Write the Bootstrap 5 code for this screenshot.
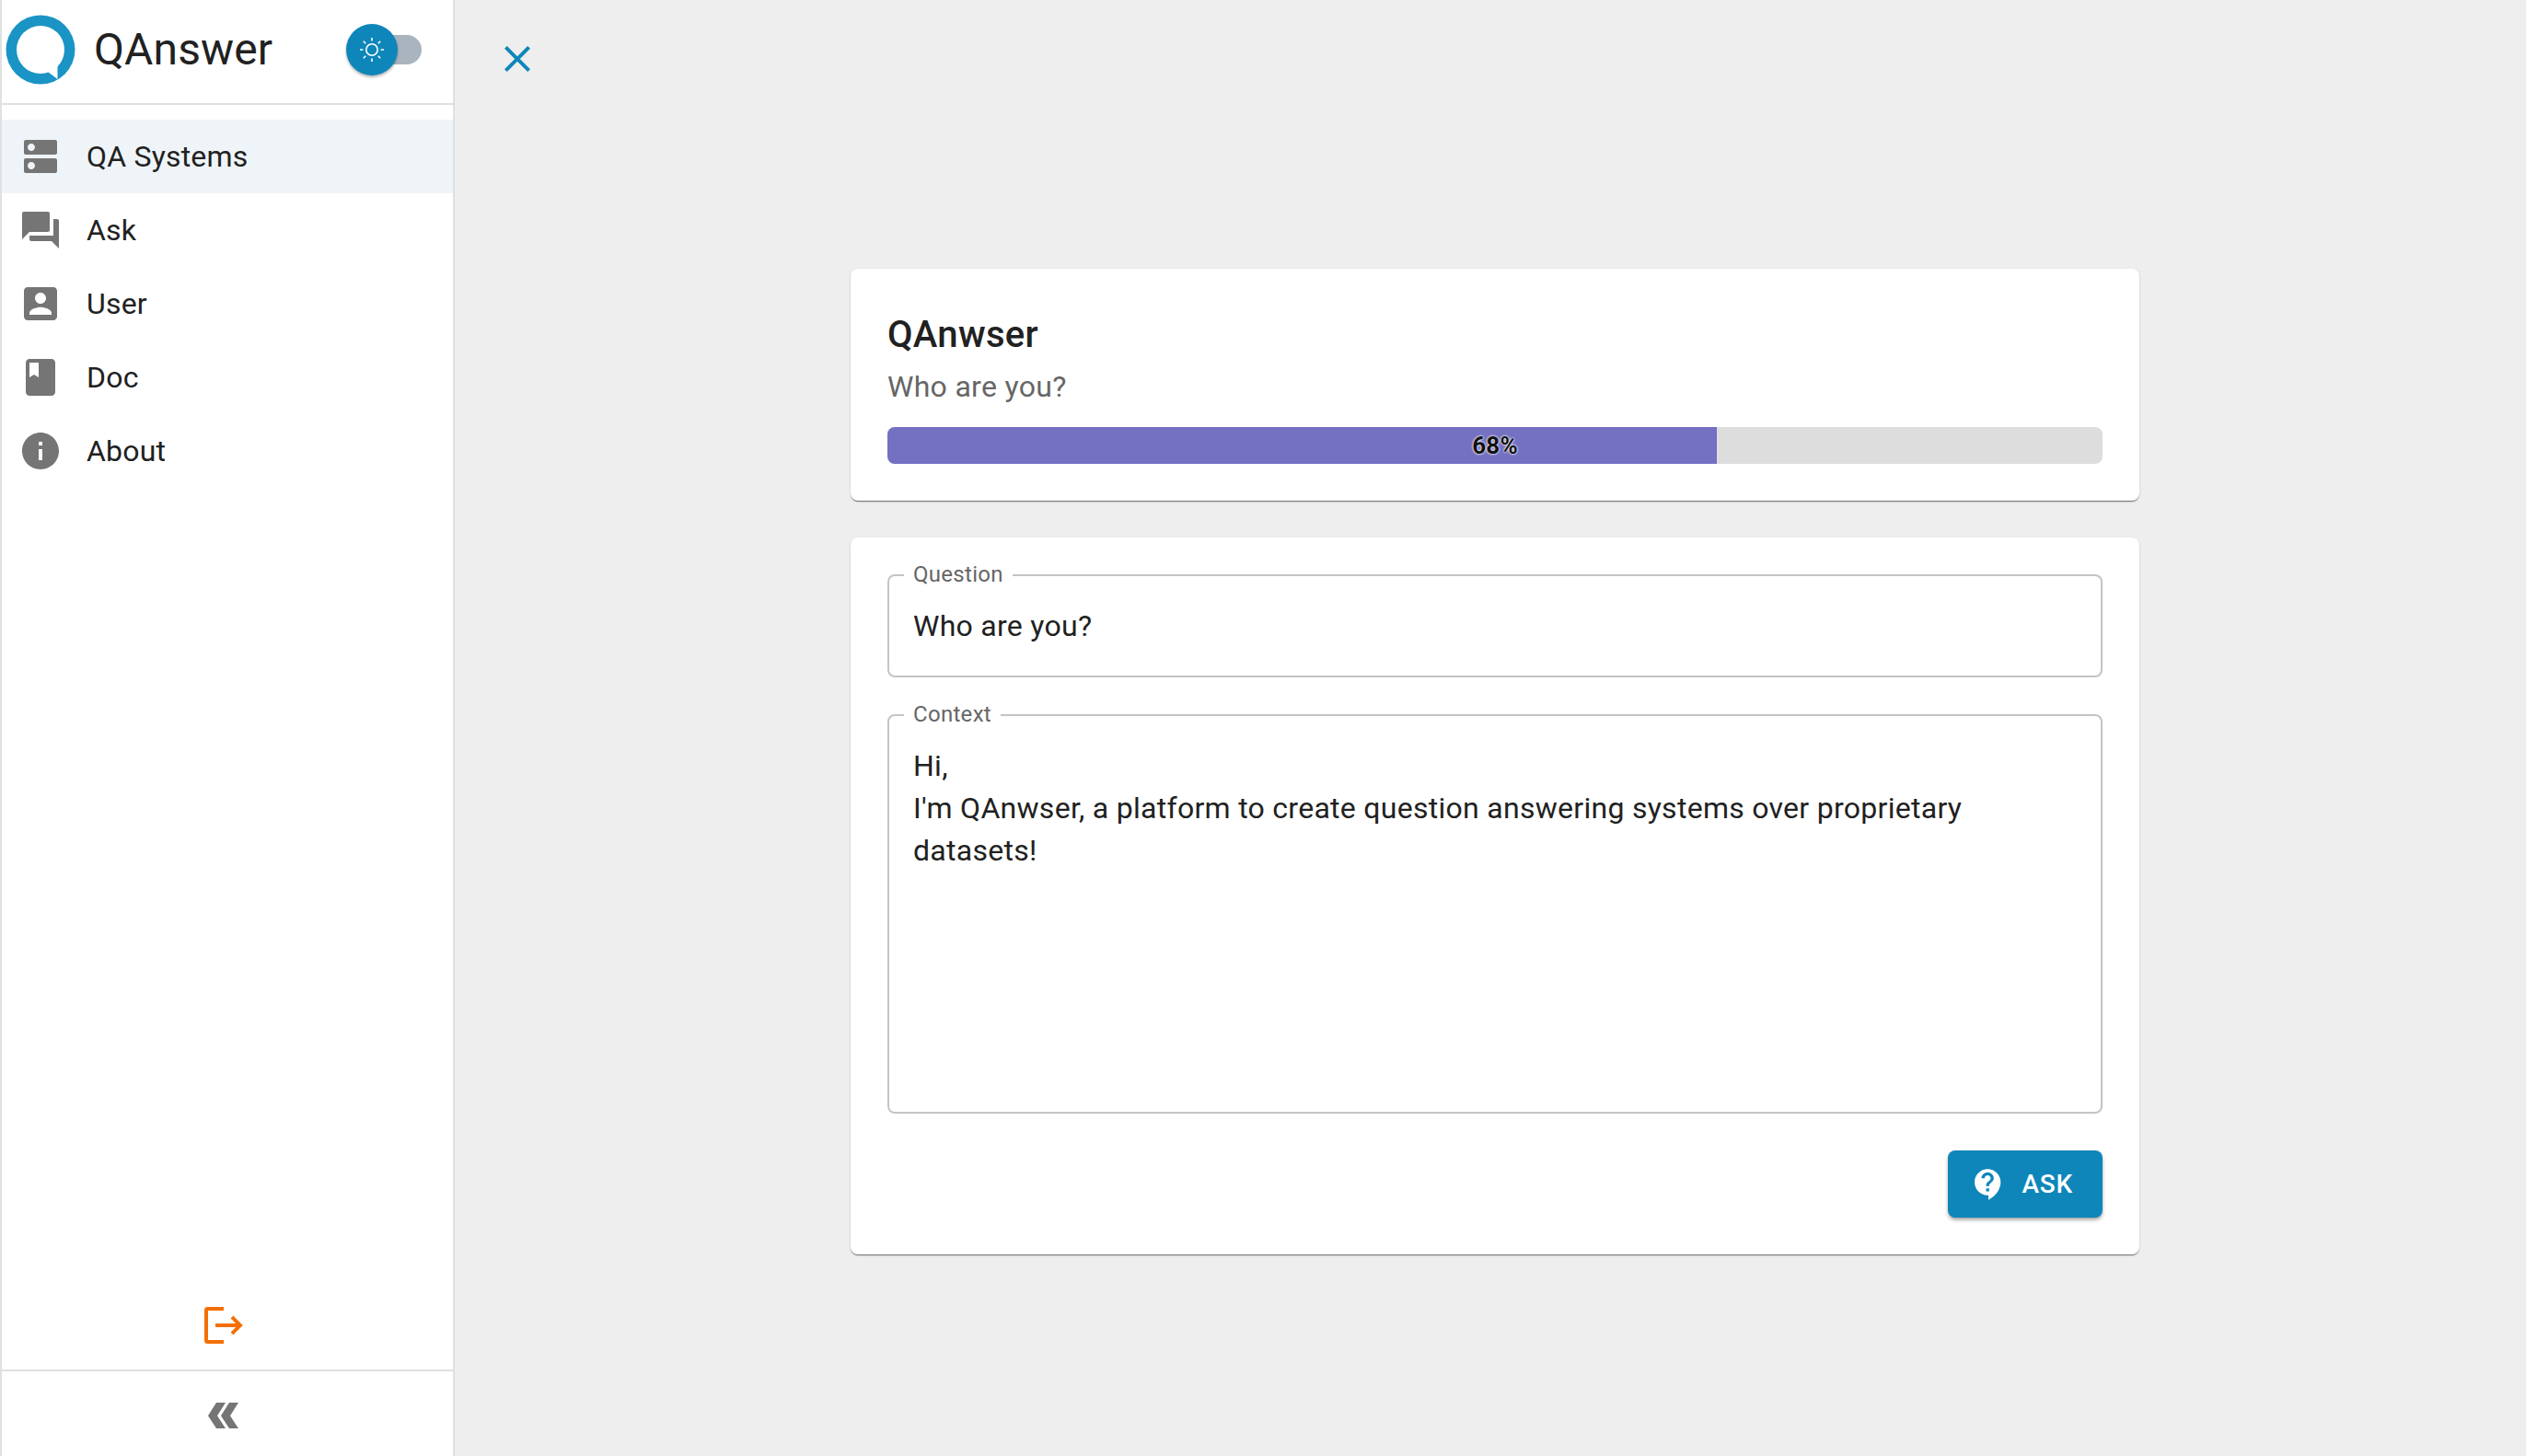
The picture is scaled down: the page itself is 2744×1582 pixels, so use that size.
<!DOCTYPE html>
<html lang="en">
<head>
    <meta charset="utf-8">
    <title>QAnswer</title>
    <link href="https://cdn.jsdelivr.net/npm/bootstrap@5.3.3/dist/css/bootstrap.min.css" rel="stylesheet">
    <style>
        body {
            font-family: Roboto, "Liberation Sans", sans-serif;
            background-color: #eeeeee;
            color: #212121;
            font-size: 32px;
            letter-spacing: .2px;
        }
        .app-shell { height: 100vh; overflow: hidden; }
        .side-panel {
            width: 494px;
            background: #fff;
            border-left: 2px solid #e0e0e0;
            border-right: 2px solid #e0e0e0;
        }
        .side-head { height: 112px; padding-left: 4px; padding-bottom: 4px; }
        .side-logo { width: 76px; height: 76px; }
        .side-title { font-size: 48px; margin-left: 20px; line-height: 1; letter-spacing: .1px; }
        .theme-switch { position: relative; width: 82px; height: 56px; margin-left: 80px; }
        .switch-track {
            position: absolute; left: 14px; top: 12px; width: 68px; height: 32px;
            border-radius: 16px; background: #a9b4be;
        }
        .switch-thumb {
            position: absolute; left: 0; top: 0; width: 56px; height: 56px; border-radius: 50%;
            background: #0e86ba; box-shadow: 0 2px 3px rgba(0,0,0,.3);
        }
        .side-rule { height: 2px; background: #e0e0e0; }
        .side-menu { padding-top: 16px; }
        .menu-row { height: 80px; padding-left: 18px; color: #212121; text-decoration: none; }
        .menu-row.is-current { background: #eff4f8; }
        .menu-icon { width: 48px; height: 48px; margin-right: 26px; fill: #757575; flex: none; }
        .logout-wrap { height: 96px; padding-right: 8px; }
        .collapse-wrap { height: 92px; padding-right: 9px; padding-top: 3px; }
        .main-area { padding-left: 430px; width: 2250px; }
        .close-btn { left: 44px; top: 40px; width: 48px; height: 48px; fill: #0e86ba; }
        .sheet {
            width: 1400px; padding: 40px; background: #fff; border: 0; border-radius: 8px;
            box-shadow: 0 2px 1px -1px rgba(0,0,0,.35), 0 1px 1px rgba(0,0,0,.2), 0 1px 3px rgba(0,0,0,.12);
        }
        .sheet-one { margin-top: 292px; margin-bottom: 40px; }
        .sheet-title { font-size: 40px; font-weight: 500; line-height: 64px; margin: 0; letter-spacing: .3px; }
        .sheet-sub { font-size: 32px; line-height: 48px; margin: 0 0 20px; color: #666; letter-spacing: .3px; }
        .meter { height: 40px; border-radius: 8px; background: #dddddd; position: relative; }
        .meter .progress-bar { background: #7470c2; }
        .meter-label {
            position: absolute; inset: 0; text-align: center; line-height: 40px; font-size: 26px; font-weight: 700;
            color: #111; text-shadow: 0 0 3px #fff, 0 0 2px #fff;
        }
        .field-box { position: relative; margin-bottom: 40px; }
        .field-box label {
            position: absolute; left: 18px; top: -15px; padding: 0 10px; background: #fff;
            font-size: 24px; line-height: 30px; color: #666; letter-spacing: .3px;
        }
        .field-box .form-control {
            border: 2px solid #c4c4c4; border-radius: 8px; font-size: 32px; color: #212121;
            font-family: inherit; letter-spacing: .28px;
        }
        .field-input { height: 112px; padding: 0 26px; }
        .field-area { height: 434px; padding: 31px 26px; line-height: 46px; resize: none; }
        .ask-btn {
            background: #0e86ba; color: #fff; border: 0; border-radius: 8px; height: 73px;
            padding: 0 32px 0 24px; font-size: 28px; font-weight: 500; letter-spacing: .8px; line-height: 49px;
            box-shadow: 0 3px 4px -1px rgba(0,0,0,.3), 0 2px 4px rgba(0,0,0,.15);
        }
        .ask-btn svg { width: 40px; height: 40px; fill: #fff; margin-right: 16px; }
    </style>
</head>
<body>
<div class="app-shell d-flex">
    <aside class="side-panel d-flex flex-column flex-shrink-0">
        <div class="side-head d-flex align-items-center">
            <svg class="side-logo" viewBox="0 0 76 76" aria-label="QAnswer logo">
                <circle cx="38" cy="38" r="37.5" fill="#1a94c4"/>
                <circle cx="38" cy="38" r="26" fill="#fff"/>
                <polygon points="46,62 56.5,70 56.5,54" fill="#fff"/>
            </svg>
            <span class="side-title">QAnswer</span>
            <div class="theme-switch">
                <span class="switch-track"></span>
                <span class="switch-thumb d-flex align-items-center justify-content-center">
                    <svg width="28" height="28" viewBox="0 0 28 28" fill="none" stroke="#fff" stroke-width="1.6">
                        <circle cx="14" cy="14" r="6.2"/>
                        <path d="M14 1v3.4M14 23.6V27M1 14h3.4M23.6 14H27M4.8 4.8l2.4 2.4M20.8 20.8l2.4 2.4M4.8 23.2l2.4-2.4M20.8 7.2l2.4-2.4"/>
                    </svg>
                </span>
            </div>
        </div>
        <div class="side-rule"></div>
        <nav class="side-menu d-flex flex-column">
            <a class="menu-row is-current d-flex align-items-center" href="#">
                <svg class="menu-icon" viewBox="0 0 24 24"><path d="M20 13H4c-.55 0-1 .45-1 1v6c0 .55.45 1 1 1h16c.55 0 1-.45 1-1v-6c0-.55-.45-1-1-1zM7 19c-1.1 0-2-.9-2-2s.9-2 2-2 2 .9 2 2-.9 2-2 2zM20 3H4c-.55 0-1 .45-1 1v6c0 .55.45 1 1 1h16c.55 0 1-.45 1-1V4c0-.55-.45-1-1-1zM7 9c-1.1 0-2-.9-2-2s.9-2 2-2 2 .9 2 2-.9 2-2 2z"/></svg>
                <span>QA Systems</span>
            </a>
            <a class="menu-row d-flex align-items-center" href="#">
                <svg class="menu-icon" viewBox="0 0 24 24"><path d="M21 6h-2v9H6v2c0 .55.45 1 1 1h11l4 4V7c0-.55-.45-1-1-1zm-4 6V3c0-.55-.45-1-1-1H3c-.55 0-1 .45-1 1v14l4-4h10c.55 0 1-.45 1-1z"/></svg>
                <span>Ask</span>
            </a>
            <a class="menu-row d-flex align-items-center" href="#">
                <svg class="menu-icon" viewBox="0 0 24 24"><path d="M3 5v14c0 1.1.89 2 2 2h14c1.1 0 2-.9 2-2V5c0-1.1-.9-2-2-2H5c-1.11 0-2 .9-2 2zm12 4c0 1.66-1.34 3-3 3s-3-1.34-3-3 1.34-3 3-3 3 1.34 3 3zm-9 8c0-2 4-3.1 6-3.1s6 1.1 6 3.1v1H6v-1z"/></svg>
                <span>User</span>
            </a>
            <a class="menu-row d-flex align-items-center" href="#">
                <svg class="menu-icon" viewBox="0 0 24 24"><path d="M18 2H6c-1.1 0-2 .9-2 2v16c0 1.1.9 2 2 2h12c1.1 0 2-.9 2-2V4c0-1.1-.9-2-2-2zM6 4h5v8l-2.5-1.5L6 12V4z"/></svg>
                <span>Doc</span>
            </a>
            <a class="menu-row d-flex align-items-center" href="#">
                <svg class="menu-icon" viewBox="0 0 24 24"><path d="M12 2C6.48 2 2 6.48 2 12s4.48 10 10 10 10-4.48 10-10S17.52 2 12 2zm1 15h-2v-6h2v6zm0-8h-2V7h2v2z"/></svg>
                <span>About</span>
            </a>
        </nav>
        <div class="logout-wrap mt-auto d-flex align-items-center justify-content-center">
            <svg width="48" height="48" viewBox="0 0 48 48" fill="none" stroke="#f36f06" stroke-width="4">
                <path d="M24 6H6.5a1.5 1.5 0 0 0-1.5 1.5v33A1.5 1.5 0 0 0 6.500 42H24"/>
                <path d="M15 24h26M33 15l9 9-9 9"/>
            </svg>
        </div>
        <div class="side-rule"></div>
        <div class="collapse-wrap d-flex align-items-center justify-content-center">
            <svg width="33" height="28" viewBox="228 432 99 84" fill="#757575">
                <polygon points="228,475 255,432 285,432 258,475 285,516 255,516"/>
                <polygon points="270,475 297,432 327,432 300,475 327,516 297,516"/>
            </svg>
        </div>
    </aside>

    <main class="main-area flex-shrink-0 position-relative">
        <svg class="close-btn position-absolute" viewBox="0 0 24 24"><path d="M19 6.41L17.59 5 12 10.59 6.41 5 5 6.41 10.59 12 5 17.59 6.41 19 12 13.41 17.59 19 19 17.59 13.41 12z"/></svg>
        <div class="sheet sheet-one card">
            <h1 class="sheet-title">QAnwser</h1>
            <p class="sheet-sub">Who are you?</p>
            <div class="progress meter">
                <div class="progress-bar" role="progressbar" style="width:68.25%;" aria-valuenow="68" aria-valuemin="0" aria-valuemax="100"></div>
                <span class="meter-label">68%</span>
            </div>
        </div>
        <div class="sheet card">
            <div class="field-box">
                <label for="question">Question</label>
                <input id="question" class="form-control field-input" type="text" value="Who are you?">
            </div>
            <div class="field-box">
                <label for="context">Context</label>
                <textarea id="context" class="form-control field-area">Hi,
I'm QAnwser, a platform to create question answering systems over proprietary datasets!</textarea>
            </div>
            <div class="d-flex justify-content-end">
                <button class="btn ask-btn d-inline-flex align-items-center text-uppercase" type="button">
                    <svg viewBox="0 0 24 24"><path d="M11.5 2C6.81 2 3 5.81 3 10.5S6.81 19 11.500 19h.5v3c4.860-2.340 8-7 8-11.500C20 5.810 16.190 2 11.500 2zm1 14.500h-2v-2h2v2zm0-3.500h-2c0-3.250 3-3 3-5 0-1.100-.9-2-2-2s-2 .9-2 2h-2c0-2.210 1.790-4 4-4s4 1.790 4 4c0 2.500-3 2.750-3 5z"/></svg>
                    Ask
                </button>
            </div>
        </div>
    </main>
</div>
<script src="https://cdn.jsdelivr.net/npm/bootstrap@5.3.3/dist/js/bootstrap.bundle.min.js"></script>
</body>
</html>
